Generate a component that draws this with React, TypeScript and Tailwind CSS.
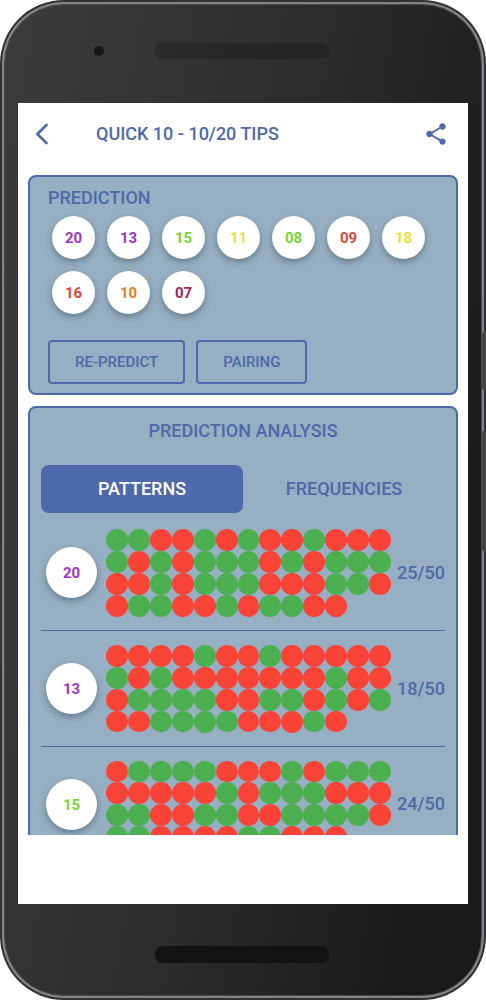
import { useState } from "react";
import { MdArrowBackIosNew, MdShare } from "react-icons/md";

interface BallProps {
  value: string;
  large?: boolean;
}

interface PatternRowProps {
  value: string;
  draws: string;
}

const prediction = ["20", "13", "15", "11", "08", "09", "18", "16", "10", "07"];

const ballColors: Record<string, string> = {
  "20": "text-[#a134c4]",
  "13": "text-[#a134c4]",
  "15": "text-[#76d636]",
  "11": "text-[#e8e03c]",
  "08": "text-[#76d636]",
  "09": "text-[#e2453c]",
  "18": "text-[#e8e03c]",
  "16": "text-[#e2453c]",
  "10": "text-[#ee7a1c]",
  "07": "text-[#a81f5c]",
};

// Last 50 draws per number, G = drawn, R = missed
const patterns: PatternRowProps[] = [
  { value: "20", draws: "GGRRGRGRRGRRR" + "GRGRGGGRGRGGG" + "RRGRGGGRRRGGR" + "RGGRRGRGGRR" },
  { value: "13", draws: "RRRRGRRGRRRRR" + "GRGRRRRRRRGRR" + "RGGGGRRGGRGRG" + "RRGGGGRRRGR" },
  { value: "15", draws: "RGGGGRRRGRGGG" + "RRRRRGRGGGRRR" + "GGRRGGRRGGGGR" + "GGRRRRGGRRR" },
];

const Ball = ({ value, large = false }: BallProps) => (
  <div
    className={`${large ? "size-[51px]" : "size-[43px]"} ${ballColors[value]} flex shrink-0 items-center justify-center rounded-full bg-white pt-px text-[15px] font-bold shadow-[0_3px_6px_rgba(50,75,90,0.5)]`}
  >
    {value}
  </div>
);

const PatternRow = ({ value, draws }: PatternRowProps) => {
  const hits = draws.split("").filter((d) => d === "G").length;

  return (
    <li className="flex items-center border-b border-[#4e69aa] pt-3.5 pb-[13px] pl-[5px]">
      <Ball value={value} large />
      <div className="ml-[9px] grid flex-1 grid-cols-[repeat(13,minmax(0,1fr))]">
        {draws.split("").map((d, i) => (
          <span key={i} className={`aspect-square rounded-full ${d === "G" ? "bg-[#4caf50]" : "bg-[#f94336]"}`} />
        ))}
      </div>
      <span className="ml-1.5 text-lg leading-6 font-medium">
        {hits}/{draws.length}
      </span>
    </li>
  );
};

export default function App() {
  const [tab, setTab] = useState("PATTERNS");

  return (
    <div className="h-dvh bg-white font-['Roboto',sans-serif] text-[#4e69aa]">
      {/* Phone body */}
      <div className="relative h-full rounded-[64px] bg-[#333135] p-0.5">
        <div className="h-full rounded-[62px] bg-[#858385] p-0.5">
          <div className="flex h-full flex-col rounded-[60px] border border-[#4b494c] bg-linear-[100deg,#3e3b3f_0%,#2d2b2e_50%,#1b191c_88%] px-[13px]">
            <div className="flex h-[98px] shrink-0 items-center pb-1.5">
              <span className="ml-[76px] size-2.5 rounded-full bg-[#171519]" />
              <span className="ml-[51px] h-4 w-[174px] rounded-md bg-linear-to-r from-[#2c2a2d] via-[#272528] to-[#262427]" />
            </div>

            {/* Screen */}
            <div className="flex min-h-0 flex-1 flex-col bg-white">
              <header className="flex h-[62px] shrink-0 items-center px-[11px]">
                <button type="button" aria-label="Back">
                  <MdArrowBackIosNew size={26} />
                </button>
                <h1 className="ml-[41px] flex-1 text-lg leading-6 font-medium">QUICK 10 - 10/20 TIPS</h1>
                <button type="button" aria-label="Share" className="mr-2">
                  <MdShare size={26} />
                </button>
              </header>

              <main className="flex min-h-0 flex-1 flex-col gap-[11px] overflow-y-auto px-2.5 pt-2.5 [scrollbar-width:none]">
                <section className="shrink-0 rounded-lg border-2 border-[#4e69aa] bg-[#97afc2] px-[18px] py-[9px]">
                  <h2 className="text-lg leading-6 font-medium">PREDICTION</h2>
                  <div className="mt-1.5 ml-1 flex flex-wrap gap-3">
                    {prediction.map((n) => (
                      <Ball key={n} value={n} />
                    ))}
                  </div>
                  <div className="mt-[26px] flex gap-[11px]">
                    <button type="button" className="h-11 rounded border-2 border-[#4e69aa] px-[25px] text-[15px] font-medium">
                      RE-PREDICT
                    </button>
                    <button type="button" className="h-11 rounded border-2 border-[#4e69aa] px-[25px] text-[15px] font-medium">
                      PAIRING
                    </button>
                  </div>
                </section>

                <section className="shrink-0 rounded-lg border-2 border-[#4e69aa] bg-[#97afc2] px-[11px] pt-[11px]">
                  <h2 className="text-center text-lg leading-6 font-medium">PREDICTION ANALYSIS</h2>
                  <div role="tablist" className="mt-[22px] mb-0.5 grid grid-cols-2">
                    {["PATTERNS", "FREQUENCIES"].map((name) => (
                      <button
                        key={name}
                        type="button"
                        role="tab"
                        aria-selected={tab === name}
                        onClick={() => setTab(name)}
                        className={`h-12 rounded-lg text-lg font-medium ${tab === name ? "bg-[#4e69aa] text-white" : ""}`}
                      >
                        {name}
                      </button>
                    ))}
                  </div>
                  <ul>
                    {patterns.map((p) => (
                      <PatternRow key={p.value} {...p} />
                    ))}
                  </ul>
                </section>
              </main>

              {/* Ad banner space */}
              <div className="h-[69px] shrink-0" />
            </div>

            <div className="flex h-[91px] shrink-0 items-center pt-2.5">
              <span className="ml-[137px] h-[17px] w-[174px] rounded-lg bg-[#131114]" />
            </div>
          </div>
        </div>

        {/* Side buttons */}
        <span className="absolute top-[331px] right-0 h-[60px] w-1 rounded-l-sm bg-[#454346]" />
        <span className="absolute top-[430px] right-0 h-[122px] w-1 rounded-l-sm bg-[#454346]" />
      </div>
    </div>
  );
}
